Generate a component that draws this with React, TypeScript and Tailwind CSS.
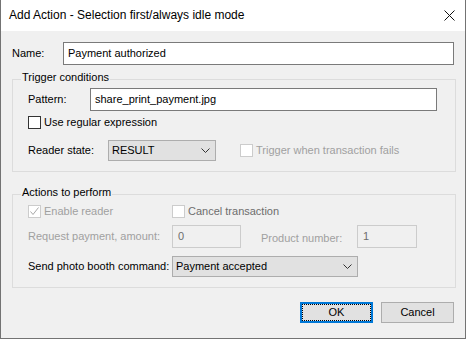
import React from "react";

const font = { fontFamily: '"Liberation Sans", Arial, sans-serif' };

function Chevron() {
  return (
    <svg width="9" height="5" viewBox="0 0 9 5" className="shrink-0">
      <polyline points="0.5,0.5 4.5,4.5 8.5,0.5" fill="none" stroke="#333" strokeWidth="1" />
    </svg>
  );
}

function Checkbox({ checked, disabled }: { checked?: boolean; disabled?: boolean }) {
  return (
    <div
      className={`w-[13px] h-[13px] shrink-0 border bg-white flex items-center justify-center ${
        disabled ? "border-[#cccccc]" : "border-[#333333]"
      }`}
    >
      {checked && (
        <svg width="11" height="11" viewBox="0 0 11 11">
          <polyline points="1.5,5.5 4,8.5 9.5,1.5" fill="none" stroke="#a8a8a8" strokeWidth="1" />
        </svg>
      )}
    </div>
  );
}

function Combo({ value, width }: { value: string; width: string }) {
  return (
    <div
      className={`${width} h-[21px] shrink-0 bg-[#e1e1e1] border border-[#adadad] flex items-center justify-between pl-[3px] pr-[5px] text-black`}
    >
      <span>{value}</span>
      <Chevron />
    </div>
  );
}

function GroupBox({ title, children }: { title: string; children: React.ReactNode }) {
  return (
    <div className="w-[444px] border border-[#dcdcdc] pl-[15px]">
      <div className="-mt-[10px] -ml-[7px] w-fit px-[1px] bg-[#f0f0f0] leading-[15px] text-black">{title}</div>
      {children}
    </div>
  );
}

export default function App() {
  return (
    <div
      className="w-[466px] h-[339px] flex flex-col border-x border-b border-[#737373] bg-[#f0f0f0] text-[11px] leading-[15px] whitespace-nowrap"
      style={font}
    >
      {/* Title bar */}
      <div className="h-[31px] bg-white flex items-center justify-between pl-[8px] pr-[10px] text-[12px] text-black">
        <span>Add Action - Selection first/always idle mode</span>
        <svg width="11" height="11" viewBox="0 0 11 11">
          <path d="M0.5 0.5 L10.5 10.5 M10.5 0.5 L0.5 10.5" stroke="#111" strokeWidth="1" />
        </svg>
      </div>

      <div className="flex-1 flex flex-col pl-[11px] text-black">
        {/* Name */}
        <div className="mt-[11px] h-[23px] flex items-center">
          <span className="w-[51px] shrink-0">Name:</span>
          <div className="w-[391px] h-[23px] shrink-0 bg-white border border-[#7a7a7a] flex items-center pl-[4px]">
            Payment authorized
          </div>
        </div>

        {/* Trigger conditions */}
        <div className="mt-[14px]">
          <GroupBox title="Trigger conditions">
            <div className="mt-[3px] h-[23px] flex items-center">
              <span className="w-[62px] shrink-0">Pattern:</span>
              <div className="w-[347px] h-[23px] shrink-0 bg-white border border-[#7a7a7a] flex items-center pl-[4px]">
                share_print_payment.jpg
              </div>
            </div>
            <div className="mt-[4px] h-[15px] flex items-center gap-[3px]">
              <Checkbox />
              <span>Use regular expression</span>
            </div>
            <div className="mt-[10px] h-[21px] flex items-center">
              <span className="w-[80px] shrink-0">Reader state:</span>
              <Combo value="RESULT" width="w-[108px]" />
              <div className="ml-[24px] flex items-center gap-[3px] text-[#a0a0a0]">
                <Checkbox disabled />
                <span>Trigger when transaction fails</span>
              </div>
            </div>
            <div className="h-[10px]" />
          </GroupBox>
        </div>

        {/* Actions to perform */}
        <div className="mt-[22px]">
          <GroupBox title="Actions to perform">
            <div className="mt-[4px] h-[15px] flex items-center">
              <div className="w-[144px] shrink-0 flex items-center gap-[3px] text-[#a0a0a0]">
                <Checkbox checked disabled />
                <span>Enable reader</span>
              </div>
              <div className="flex items-center gap-[3px] text-[#6d6d6d]">
                <Checkbox disabled />
                <span>Cancel transaction</span>
              </div>
            </div>
            <div className="mt-[6px] h-[23px] flex items-center text-[#a0a0a0]">
              <span className="w-[144px] shrink-0">Request payment, amount:</span>
              <div className="w-[69px] h-[23px] shrink-0 border border-[#cccccc] flex items-center pl-[5px] text-[#6d6d6d]">0</div>
              <span className="ml-[20px] w-[96px] shrink-0 mt-[3px]">Product number:</span>
              <div className="w-[60px] h-[23px] shrink-0 border border-[#cccccc] flex items-center pl-[5px] text-[#6d6d6d]">1</div>
            </div>
            <div className="mt-[8px] h-[21px] flex items-center">
              <span className="w-[144px] shrink-0">Send photo booth command:</span>
              <Combo value="Payment accepted" width="w-[186px]" />
            </div>
            <div className="h-[10px]" />
          </GroupBox>
        </div>

        {/* Buttons */}
        <div className="mt-[14px] flex justify-end gap-[8px] pr-[11px]">
          <div className="w-[73px] h-[21px] border-2 border-[#0078d7] bg-[#e1e1e1] flex">
            <div className="flex-1 border border-dotted border-black flex items-center justify-center">OK</div>
          </div>
          <div className="w-[73px] h-[21px] border border-[#adadad] bg-[#e1e1e1] flex items-center justify-center">
            Cancel
          </div>
        </div>
      </div>
    </div>
  );
}
